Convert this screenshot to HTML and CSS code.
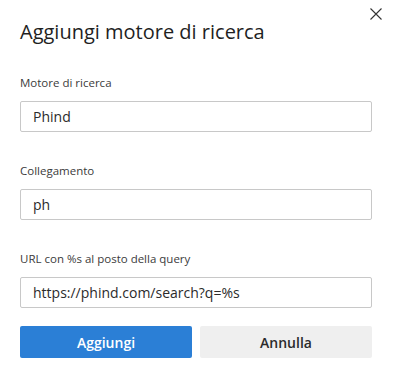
FILE: index.html
```html
<!DOCTYPE html>
<html lang="it">
<head>
<meta charset="utf-8">
<title>Aggiungi motore di ricerca</title>
<link rel="stylesheet" href="styles.css">
</head>
<body>
<div class="dialog">
  <button class="close" aria-label="Chiudi">
    <svg width="12" height="12" viewBox="0 0 12 12"><path d="M0.5 0.5 L11.5 11.5 M11.5 0.5 L0.5 11.5" stroke="#333" stroke-width="1.1" fill="none"/></svg>
  </button>
  <h1 class="title">Aggiungi motore di ricerca</h1>
  <div class="field">
    <label class="label">Motore di ricerca</label>
    <div class="input">Phind</div>
  </div>
  <div class="field">
    <label class="label">Collegamento</label>
    <div class="input">ph</div>
  </div>
  <div class="field">
    <label class="label">URL con %s al posto della query</label>
    <div class="input">https://phind.com/search?q=%s</div>
  </div>
  <div class="actions">
    <button class="btn primary">Aggiungi</button>
    <button class="btn secondary">Annulla</button>
  </div>
</div>
</body>
</html>
```

FILE: styles.css
```css
html, body {
  margin: 0;
  padding: 0;
  background: #fff;
}
body {
  font-family: "Open Sans", "Noto Sans", sans-serif;
  color: #1b1b1b;
}
.dialog {
  position: relative;
  width: 393px;
  height: 377px;
  box-sizing: border-box;
  padding: 18px 21px 0 20px;
  display: flex;
  flex-direction: column;
}
.close {
  position: absolute;
  top: 8px;
  right: 11px;
  width: 12px;
  height: 12px;
  padding: 0;
  border: 0;
  background: none;
  display: flex;
}
.title {
  margin: 0;
  font-size: 20px;
  line-height: 28px;
  font-weight: 400;
  color: #1f1f1f;
}
.field {
  display: flex;
  flex-direction: column;
  gap: 10px;
}
.field:first-of-type {
  margin-top: 29px;
}
.field + .field {
  margin-top: 31px;
}
.label {
  font-size: 11.5px;
  line-height: 16px;
  color: #3b3b3b;
}
.input {
  height: 31px;
  box-sizing: border-box;
  border: 1px solid #c8c8c8;
  border-radius: 2px;
  padding: 0 12px;
  font-size: 14px;
  line-height: 29px;
  color: #2b2b2b;
}
.actions {
  display: grid;
  grid-template-columns: 1fr 1fr;
  gap: 8px;
  margin-top: 18px;
}
.btn {
  height: 32px;
  border: 0;
  border-radius: 2px;
  font-family: "Open Sans", "Noto Sans", sans-serif;
  font-size: 14px;
  font-weight: 600;
}
.primary {
  background: #2b7fd6;
  color: #fff;
}
.secondary {
  background: #efefef;
  color: #2b2b2b;
}
```
